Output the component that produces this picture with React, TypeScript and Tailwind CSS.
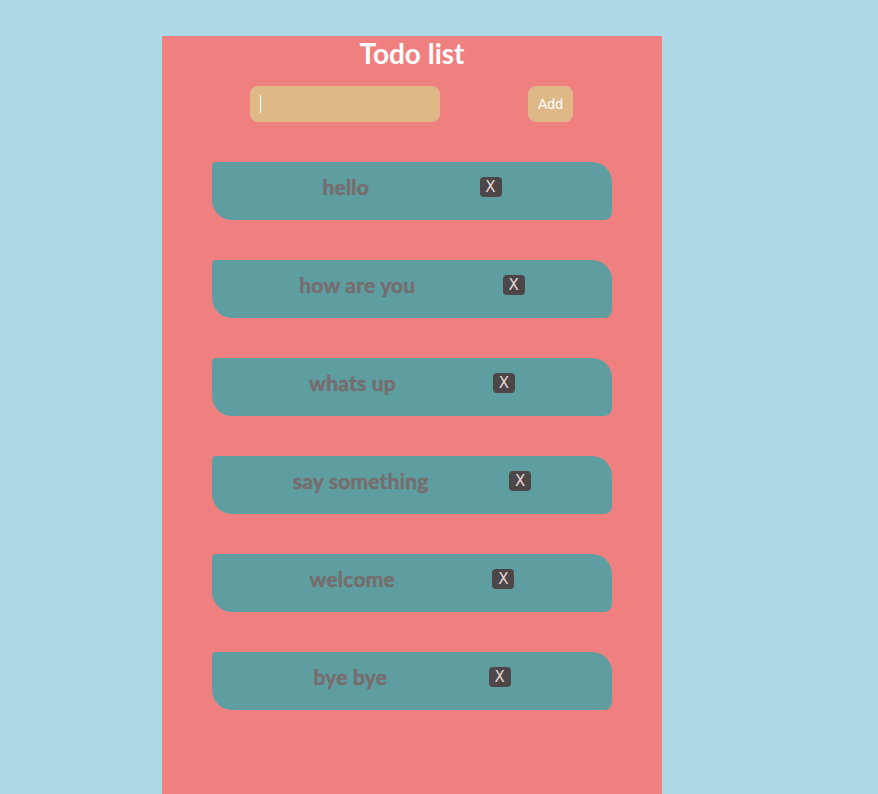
import React from "react"

const todos = ["hello", "how are you", "whats up", "say something", "welcome", "bye bye"]

export default function App() {
  return (
    <div className="min-h-[794px] bg-[#add8e6] pt-[36px]" style={{ fontFamily: "Lato, sans-serif" }}>
      <div className="ml-[162px] h-[758px] w-[500px] bg-[#f08080]">
        {/* Title */}
        <h1 className="m-0 text-center text-[28px] font-bold leading-[34px] text-white">Todo list</h1>

        {/* Input row */}
        <div className="mt-4 flex pl-[88px]">
          <div className="relative">
            <input className="h-9 w-[190px] rounded-lg bg-[#deb887] px-[10px] text-white outline-none" />
            {/* caret */}
            <span className="absolute left-[10px] top-[9px] h-[18px] w-px bg-white" />
          </div>
          <button
            className="ml-[88px] h-9 w-[45px] rounded-lg bg-[#deb887] text-[14px] text-white"
            style={{ fontFamily: "'Liberation Sans', Arial, sans-serif" }}
          >
            Add
          </button>
        </div>

        {/* Todo items */}
        <div className="mt-10 flex flex-col items-center gap-10">
          {todos.map((t) => (
            <TodoItem key={t} text={t} />
          ))}
        </div>
      </div>
    </div>
  )
}

function TodoItem({ text }: { text: string }) {
  return (
    <div className="flex h-[58px] w-[400px] items-center justify-evenly rounded-tl-[4px] rounded-tr-[20px] rounded-br-[8px] rounded-bl-[20px] bg-[#5f9ea0] pb-2">
      <span className="text-[21px] font-bold tracking-[0.2px] text-[#766d6e] [-webkit-text-stroke:0.5px_#766d6e]">
        {text}
      </span>
      <button
        className="flex h-5 w-[22px] items-center justify-center rounded-[4px] bg-[#4c4649] text-[15px] leading-none text-[#e6d6d6]"
        style={{ fontFamily: "'DejaVu Sans', sans-serif" }}
      >
        X
      </button>
    </div>
  )
}
